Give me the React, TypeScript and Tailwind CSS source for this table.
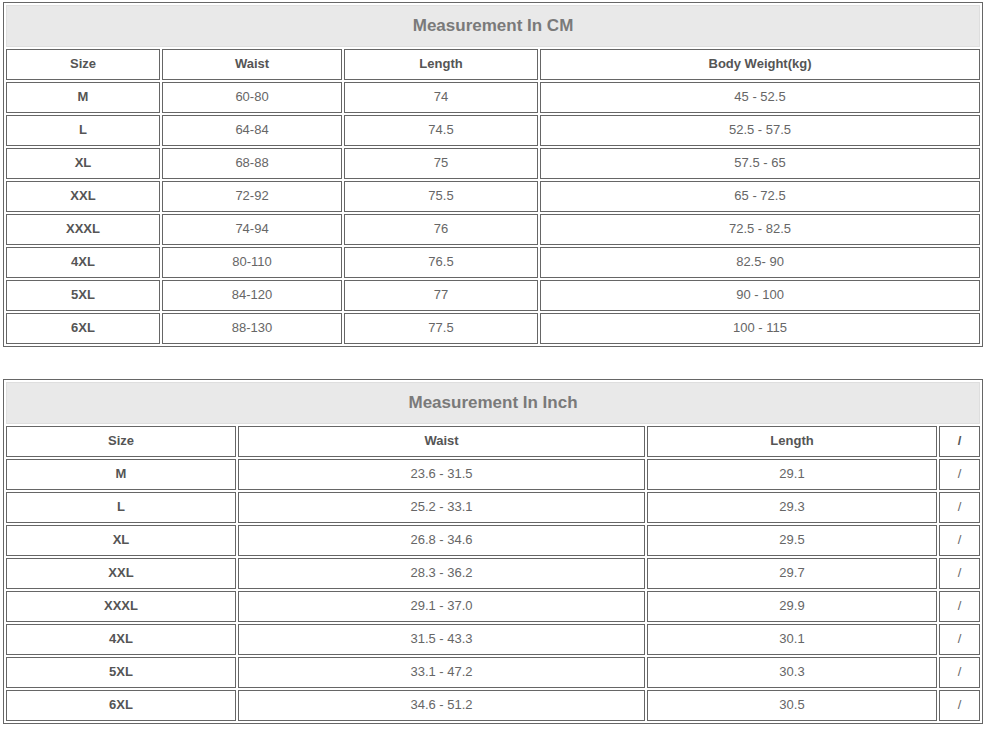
const cmRows = [
  ["M", "60-80", "74", "45 - 52.5"],
  ["L", "64-84", "74.5", "52.5 - 57.5"],
  ["XL", "68-88", "75", "57.5 - 65"],
  ["XXL", "72-92", "75.5", "65 - 72.5"],
  ["XXXL", "74-94", "76", "72.5 - 82.5"],
  ["4XL", "80-110", "76.5", "82.5- 90"],
  ["5XL", "84-120", "77", "90 - 100"],
  ["6XL", "88-130", "77.5", "100 - 115"],
];

const inchRows = [
  ["M", "23.6 - 31.5", "29.1", "/"],
  ["L", "25.2 - 33.1", "29.3", "/"],
  ["XL", "26.8 - 34.6", "29.5", "/"],
  ["XXL", "28.3 - 36.2", "29.7", "/"],
  ["XXXL", "29.1 - 37.0", "29.9", "/"],
  ["4XL", "31.5 - 43.3", "30.1", "/"],
  ["5XL", "33.1 - 47.2", "30.3", "/"],
  ["6XL", "34.6 - 51.2", "30.5", "/"],
];

function SizeTable({
  title,
  head,
  rows,
  cols,
}: {
  title: string;
  head: string[];
  rows: string[][];
  cols: string[];
}) {
  return (
    <table className="table-fixed w-[980px] border-separate border-spacing-[2px] border border-[#666] text-center font-['Liberation_Sans',Arial,sans-serif] text-[13px] text-[#666]">
      <colgroup>
        {cols.map((c, i) => (
          <col key={i} className={c} />
        ))}
      </colgroup>
      <tbody>
        <tr>
          <td colSpan={4} className="h-[42px] p-0 border border-[#dedede] bg-[#e9e9e9] text-[17px] font-bold text-[#7a7a7a]">
            {title}
          </td>
        </tr>
        <tr>
          {head.map((h, i) => (
            <td key={i} className="h-[31px] p-0 pb-px border border-[#666] font-bold text-[#555]">
              {h}
            </td>
          ))}
        </tr>
        {rows.map((r) => (
          <tr key={r[0]}>
            {r.map((v, i) => (
              <td key={i} className={"h-[31px] p-0 pb-px border border-[#666]" + (i === 0 ? " font-bold text-[#555]" : "")}>
                {v}
              </td>
            ))}
          </tr>
        ))}
      </tbody>
    </table>
  );
}

export default function App() {
  return (
    <div className="bg-white w-[989px] h-[731px] pl-[3px] pt-[2px]">
      <SizeTable
        title="Measurement In CM"
        head={["Size", "Waist", "Length", "Body Weight(kg)"]}
        rows={cmRows}
        cols={["w-[154px]", "w-[180px]", "w-[194px]", "w-[440px]"]}
      />
      <div className="h-[32px]" />
      <SizeTable
        title="Measurement In Inch"
        head={["Size", "Waist", "Length", "/"]}
        rows={inchRows}
        cols={["w-[230px]", "w-[407px]", "w-[290px]", "w-[41px]"]}
      />
    </div>
  );
}
